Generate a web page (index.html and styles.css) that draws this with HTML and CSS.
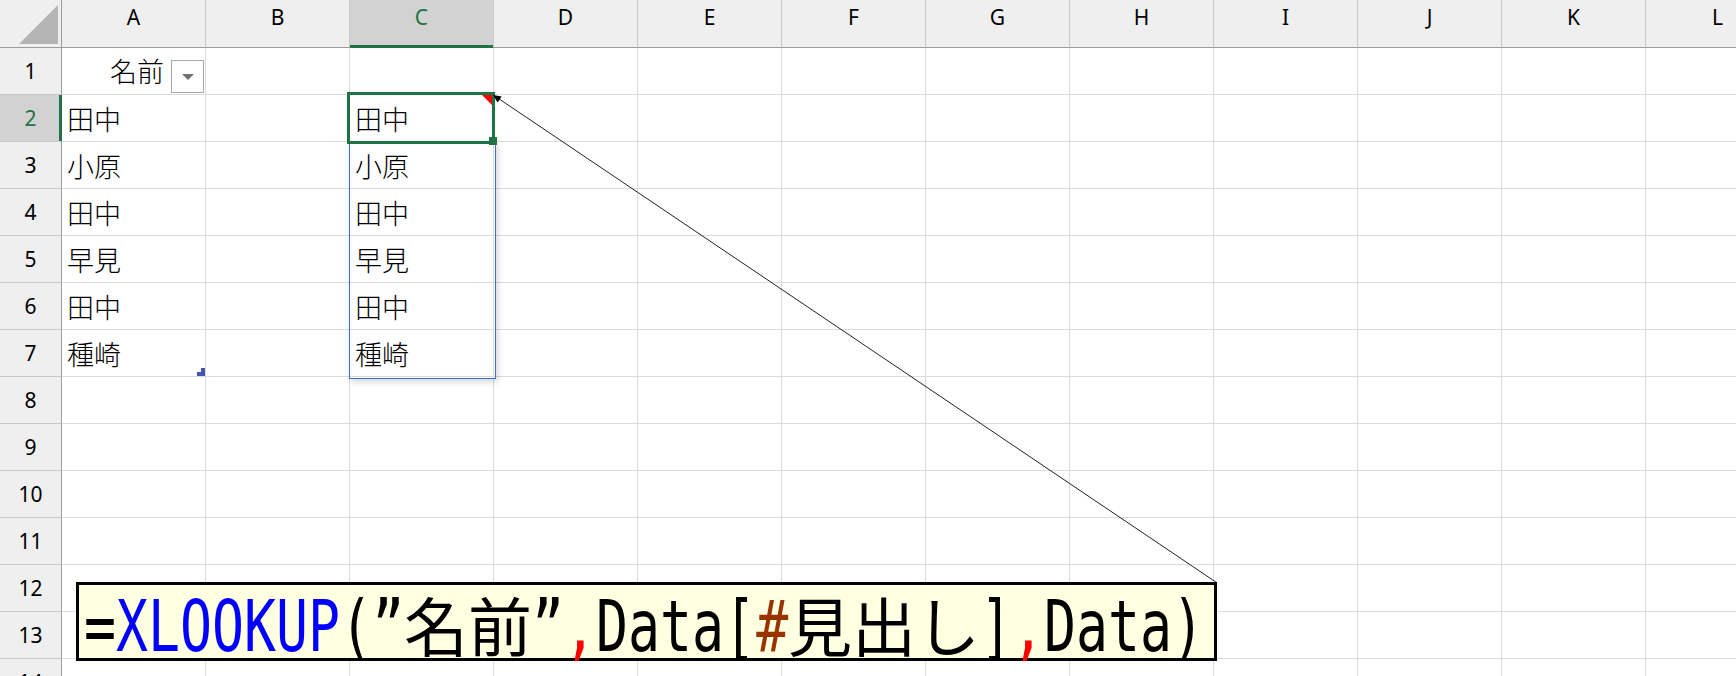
FILE: index.html
```html
<!DOCTYPE html>
<html lang="ja">
<head>
<meta charset="utf-8">
<title>XLOOKUP 見出し</title>
<link rel="stylesheet" href="styles.css">
</head>
<body>
<div class="sheet">
  <div class="grid">
    <div class="corner"><svg width="61" height="47" viewBox="0 0 61 47"><polygon points="58,5 58,44 19,44" fill="#b4b4b4"/></svg></div>
    <div class="ch">A</div><div class="ch">B</div><div class="ch on">C</div><div class="ch">D</div><div class="ch">E</div><div class="ch">F</div><div class="ch">G</div><div class="ch">H</div><div class="ch">I</div><div class="ch">J</div><div class="ch">K</div><div class="ch">L</div>

    <div class="rh">1</div>
    <div class="c a1"><span class="hd">名前</span><span class="filter"></span></div><div class="c"></div><div class="c"></div><div class="c"></div><div class="c"></div><div class="c"></div><div class="c"></div><div class="c"></div><div class="c"></div><div class="c"></div><div class="c"></div><div class="c"></div>

    <div class="rh on">2</div>
    <div class="c">田中</div><div class="c"></div><div class="c sel">田中<span class="note"></span></div><div class="c"></div><div class="c"></div><div class="c"></div><div class="c"></div><div class="c"></div><div class="c"></div><div class="c"></div><div class="c"></div><div class="c"></div>

    <div class="rh">3</div>
    <div class="c">小原</div><div class="c"></div><div class="c spill">小原</div><div class="c"></div><div class="c"></div><div class="c"></div><div class="c"></div><div class="c"></div><div class="c"></div><div class="c"></div><div class="c"></div><div class="c"></div>

    <div class="rh">4</div>
    <div class="c">田中</div><div class="c"></div><div class="c">田中</div><div class="c"></div><div class="c"></div><div class="c"></div><div class="c"></div><div class="c"></div><div class="c"></div><div class="c"></div><div class="c"></div><div class="c"></div>

    <div class="rh">5</div>
    <div class="c">早見</div><div class="c"></div><div class="c">早見</div><div class="c"></div><div class="c"></div><div class="c"></div><div class="c"></div><div class="c"></div><div class="c"></div><div class="c"></div><div class="c"></div><div class="c"></div>

    <div class="rh">6</div>
    <div class="c">田中</div><div class="c"></div><div class="c">田中</div><div class="c"></div><div class="c"></div><div class="c"></div><div class="c"></div><div class="c"></div><div class="c"></div><div class="c"></div><div class="c"></div><div class="c"></div>

    <div class="rh">7</div>
    <div class="c last">種崎<span class="resize"></span></div><div class="c"></div><div class="c">種崎</div><div class="c"></div><div class="c"></div><div class="c"></div><div class="c"></div><div class="c"></div><div class="c"></div><div class="c"></div><div class="c"></div><div class="c"></div>

    <div class="rh">8</div>
    <div class="c"></div><div class="c"></div><div class="c"></div><div class="c"></div><div class="c"></div><div class="c"></div><div class="c"></div><div class="c"></div><div class="c"></div><div class="c"></div><div class="c"></div><div class="c"></div>

    <div class="rh">9</div>
    <div class="c"></div><div class="c"></div><div class="c"></div><div class="c"></div><div class="c"></div><div class="c"></div><div class="c"></div><div class="c"></div><div class="c"></div><div class="c"></div><div class="c"></div><div class="c"></div>

    <div class="rh">10</div>
    <div class="c"></div><div class="c"></div><div class="c"></div><div class="c"></div><div class="c"></div><div class="c"></div><div class="c"></div><div class="c"></div><div class="c"></div><div class="c"></div><div class="c"></div><div class="c"></div>

    <div class="rh">11</div>
    <div class="c"></div><div class="c"></div><div class="c"></div><div class="c"></div><div class="c"></div><div class="c"></div><div class="c"></div><div class="c"></div><div class="c"></div><div class="c"></div><div class="c"></div><div class="c"></div>

    <div class="rh">12</div>
    <div class="c"></div><div class="c"></div><div class="c"></div><div class="c"></div><div class="c"></div><div class="c"></div><div class="c"></div><div class="c"></div><div class="c"></div><div class="c"></div><div class="c"></div><div class="c"></div>

    <div class="rh">13</div>
    <div class="c"></div><div class="c"></div><div class="c"></div><div class="c"></div><div class="c"></div><div class="c"></div><div class="c"></div><div class="c"></div><div class="c"></div><div class="c"></div><div class="c"></div><div class="c"></div>

    <div class="rh">14</div>
    <div class="c"></div><div class="c"></div><div class="c"></div><div class="c"></div><div class="c"></div><div class="c"></div><div class="c"></div><div class="c"></div><div class="c"></div><div class="c"></div><div class="c"></div><div class="c"></div>
  </div>

  <svg class="leader" width="1736" height="676" viewBox="0 0 1736 676">
    <line x1="1216.5" y1="582.5" x2="497" y2="97.5" stroke="#222" stroke-width="1"/>
    <polygon points="493,95 501.6,96.6 497.6,102.4" fill="#000"/>
  </svg>

  <div class="formula">
    <span class="lat w10">=<span class="fn">XLOOKUP</span>(”</span><span class="cjk">名前</span><span class="lat w8">”<span class="sep">,</span>Data[<span class="hash">#</span></span><span class="cjk">見出し</span><span class="lat w7">]<span class="sep">,</span>Data)</span>
  </div>
</div>
</body>
</html>
```

FILE: styles.css
```css
* { box-sizing: border-box; }

html, body {
  margin: 0;
  padding: 0;
  background: #fff;
  overflow: hidden;
}

.sheet {
  position: relative;
  width: 1736px;
  height: 676px;
  overflow: hidden;
}

.grid {
  display: grid;
  grid-template-columns: 62px repeat(12, 144px);
  grid-template-rows: 48px repeat(14, 47px);
  width: 1790px;
}

.corner {
  background: #efefef;
  border-right: 1px solid #9b9b9b;
  border-bottom: 1px solid #9b9b9b;
}
.corner svg { display: block; }

.ch {
  background: #efefef;
  border-right: 1px solid #c8c8c8;
  border-bottom: 1px solid #9b9b9b;
  display: flex;
  justify-content: center;
  align-items: flex-start;
  padding-top: 3px;
  font: 21px "Noto Sans", sans-serif;
  color: #000;
}
.ch.on {
  background: #d2d2d2;
  color: #217346;
  border-bottom-color: #217346;
  box-shadow: inset 0 -2px 0 #217346;
}

.rh {
  background: #efefef;
  border-right: 1px solid #9b9b9b;
  border-bottom: 1px solid #c8c8c8;
  display: flex;
  justify-content: center;
  align-items: center;
  font: 21px "Noto Sans", sans-serif;
  color: #000;
}
.rh.on {
  background: #d2d2d2;
  color: #217346;
  border-right-color: #217346;
  box-shadow: inset -2px 0 0 #217346;
}

.c {
  border-right: 1px solid #dcdcdc;
  border-bottom: 1px solid #dcdcdc;
  display: flex;
  align-items: center;
  padding-left: 5px;
  font: 300 27px "Noto Sans CJK JP", sans-serif;
  line-height: 1;
  color: #000;
  white-space: nowrap;
}

.a1 {
  justify-content: flex-end;
  padding: 0 1px 1px 0;
}
.a1 .hd { margin-right: 7px; }
.filter {
  align-self: flex-end;
  width: 33px;
  height: 33px;
  border: 1px solid #a8a8a8;
  background: #fff;
  display: flex;
  justify-content: center;
  align-items: center;
}
.filter::before {
  content: "";
  border-top: 6px solid #707070;
  border-left: 6px solid transparent;
  border-right: 6px solid transparent;
}

.sel { position: relative; }
.sel::before {
  content: "";
  position: absolute;
  left: -3px;
  right: -2px;
  top: -3px;
  bottom: -3px;
  border: 3px solid #217346;
  z-index: 3;
}
.sel::after {
  content: "";
  position: absolute;
  right: -4px;
  bottom: -4px;
  width: 8px;
  height: 8px;
  background: #217346;
  z-index: 4;
}
.note {
  position: absolute;
  top: 0;
  right: 1px;
  width: 0;
  height: 0;
  border-top: 10px solid #ff0000;
  border-left: 10px solid transparent;
  z-index: 4;
}

.spill { position: relative; }
.spill::before {
  content: "";
  position: absolute;
  left: -1px;
  top: -1px;
  width: 145px;
  height: 236px;
  border: 1px solid #3b6fd4;
  box-shadow: 2px 3px 6px rgba(0, 0, 0, 0.16);
  z-index: 1;
}

.last { position: relative; }
.resize {
  position: absolute;
  right: 0;
  bottom: 0;
  width: 8px;
  height: 8px;
  background: #4656b0;
  clip-path: polygon(0 50%, 50% 50%, 50% 0, 100% 0, 100% 100%, 0 100%);
}

.leader {
  position: absolute;
  left: 0;
  top: 0;
  pointer-events: none;
  z-index: 5;
}

.formula {
  position: absolute;
  left: 76px;
  top: 582px;
  width: 1141px;
  height: 79px;
  border: 3px solid #000;
  background: #ffffe1;
  padding: 6px 0 0 5px;
  display: flex;
  align-items: baseline;
  z-index: 6;
  color: #000;
}

.lat {
  flex: none;
  font-family: "DejaVu Sans Mono", monospace;
  font-size: 71px;
  line-height: 1;
  white-space: nowrap;
  transform: scaleX(0.749);
  transform-origin: 0 0;
}
.w10 { width: 320px; }
.w8 { width: 256px; }
.w7 { width: 224px; }

.cjk {
  flex: none;
  font-family: "Noto Sans CJK JP", sans-serif;
  font-size: 64px;
  line-height: 1;
}

.fn { color: #0000ff; }
.sep { color: #ff0000; }
.hash { color: #993300; }
```
